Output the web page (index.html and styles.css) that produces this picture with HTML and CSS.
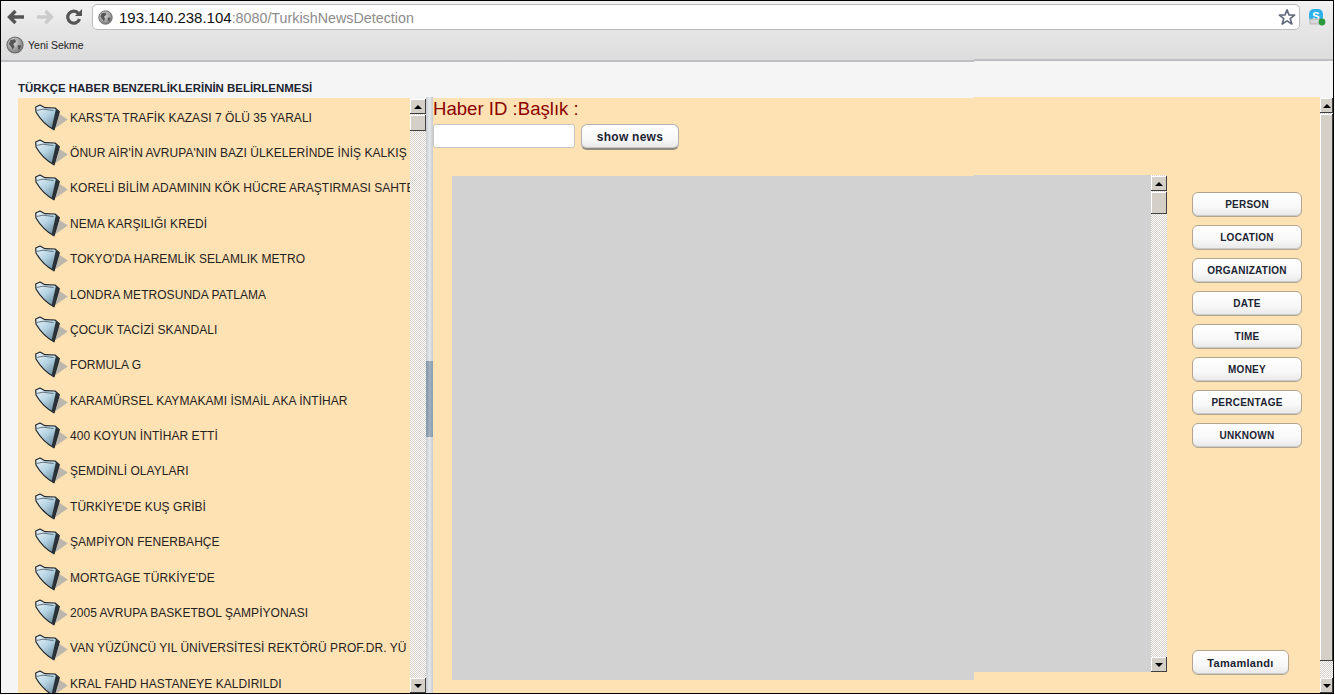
FILE: index.html
```html
<!DOCTYPE html>
<html lang="tr">
<head>
  <meta charset="UTF-8">
  <meta name="viewport" content="width=device-width, initial-scale=1.0">
  <title>TurkishNewsDetection</title>
  <link rel="stylesheet" href="styles.css">
</head>
<body>
<svg class="defs" width="0" height="0" aria-hidden="true">
  <defs>
    <linearGradient id="folderFill" x1="0" y1="0" x2="0.8" y2="1">
      <stop offset="0" stop-color="#eef6fa"/>
      <stop offset="0.5" stop-color="#b4d2e2"/>
      <stop offset="1" stop-color="#5f8296"/>
    </linearGradient>
    <radialGradient id="globeFill" cx="0.4" cy="0.35" r="0.75">
      <stop offset="0" stop-color="#dedede"/>
      <stop offset="1" stop-color="#6e6e6e"/>
    </radialGradient>
    <symbol id="folder" viewBox="0 0 34 28">
      <path d="M18 26.5 L33.8 15.5 L24 9 Z" fill="#BBB7AD"/>
      <path d="M1.7 3 L6 1 L11 3.7 L21 4 L25.3 7.7 L20 25.8 Q9 20 2 8 Z" fill="url(#folderFill)" stroke="#20272c" stroke-width="1.2" stroke-linejoin="round"/>
      <path d="M22 4.8 L25.3 7.7 L20 25.8 L17.6 24.6 Z" fill="#2a3238"/>
      <path d="M3 6.4 L9 5.2 L19.5 6.5" fill="none" stroke="#4a5a64" stroke-width="0.8"/>
    </symbol>
    <symbol id="globe" viewBox="0 0 16 16">
      <circle cx="8" cy="8" r="7.2" fill="url(#globeFill)" stroke="#6a6a6a" stroke-width="0.9"/>
      <path d="M4 3.5 L8 2.8 L9 5 L6.5 7 L7.5 9.5 L6 12 L4.5 9.5 L2.6 7 Z M10.5 8 L13.5 8.5 L12 12.5 L10.5 11 Z" fill="#565656"/>
    </symbol>
  </defs>
</svg>

<div class="window">
  <header class="browser">
    <div class="toolbar">
      <svg class="nav-icon" viewBox="0 0 18 16"><path d="M8.5 2 L2.5 8 L8.5 14 M3 8 H17" fill="none" stroke="#555555" stroke-width="3.4"/></svg>
      <svg class="nav-icon" viewBox="0 0 18 16"><path d="M9.5 2 L15.5 8 L9.5 14 M15 8 H1" fill="none" stroke="#CBCBCB" stroke-width="3.4"/></svg>
      <svg class="nav-icon" viewBox="0 0 18 16"><path d="M13.5 4.5 A6 6 0 1 0 14.5 10" fill="none" stroke="#555555" stroke-width="3.2"/><path d="M10 7 H17 V0 Z" fill="#555555"/></svg>
      <div class="address">
        <svg class="address-globe"><use href="#globe"/></svg>
        <span class="url"><span class="url-host">193.140.238.104</span>:8080/TurkishNewsDetection</span>
        <svg class="star" viewBox="0 0 18 18"><path d="M9 1.8 L11 7 L16.6 7.2 L12.2 10.6 L13.8 16 L9 12.9 L4.2 16 L5.8 10.6 L1.4 7.2 L7 7 Z" fill="#fff" stroke="#626a7c" stroke-width="1.7" stroke-linejoin="round"/></svg>
      </div>
      <svg class="skype" viewBox="0 0 18 18">
        <rect x="1" y="1" width="14" height="13" rx="5" fill="#2db0ea"/>
        <text x="8" y="11.5" class="skype-s">S</text>
        <rect x="2" y="11" width="10" height="5" fill="#d8d8d8" stroke="#999" stroke-width="0.6"/>
        <circle cx="14" cy="14" r="3.4" fill="#2a9a3c"/>
      </svg>
    </div>
    <div class="bookmarks">
      <svg class="bookmark-globe"><use href="#globe"/></svg>
      <span>Yeni Sekme</span>
    </div>
  </header>

  <main class="page">
    <h1 class="page-title">TÜRKÇE HABER BENZERLİKLERİNİN BELİRLENMESİ</h1>
    <div class="split">
      <ul class="news-list">
        <li class="news-item"><svg class="folder"><use href="#folder"/></svg>KARS'TA TRAFİK KAZASI 7 ÖLÜ 35 YARALI</li>
        <li class="news-item"><svg class="folder"><use href="#folder"/></svg>ÖNUR AİR'İN AVRUPA'NIN BAZI ÜLKELERİNDE İNİŞ KALKIŞ</li>
        <li class="news-item"><svg class="folder"><use href="#folder"/></svg>KORELİ BİLİM ADAMININ KÖK HÜCRE ARAŞTIRMASI SAHTE</li>
        <li class="news-item"><svg class="folder"><use href="#folder"/></svg>NEMA KARŞILIĞI KREDİ</li>
        <li class="news-item"><svg class="folder"><use href="#folder"/></svg>TOKYO'DA HAREMLİK SELAMLIK METRO</li>
        <li class="news-item"><svg class="folder"><use href="#folder"/></svg>LONDRA METROSUNDA PATLAMA</li>
        <li class="news-item"><svg class="folder"><use href="#folder"/></svg>ÇOCUK TACİZİ SKANDALI</li>
        <li class="news-item"><svg class="folder"><use href="#folder"/></svg>FORMULA G</li>
        <li class="news-item"><svg class="folder"><use href="#folder"/></svg>KARAMÜRSEL KAYMAKAMI İSMAİL AKA İNTİHAR</li>
        <li class="news-item"><svg class="folder"><use href="#folder"/></svg>400 KOYUN İNTİHAR ETTİ</li>
        <li class="news-item"><svg class="folder"><use href="#folder"/></svg>ŞEMDİNLİ OLAYLARI</li>
        <li class="news-item"><svg class="folder"><use href="#folder"/></svg>TÜRKİYE'DE KUŞ GRİBİ</li>
        <li class="news-item"><svg class="folder"><use href="#folder"/></svg>ŞAMPİYON FENERBAHÇE</li>
        <li class="news-item"><svg class="folder"><use href="#folder"/></svg>MORTGAGE TÜRKİYE'DE</li>
        <li class="news-item"><svg class="folder"><use href="#folder"/></svg>2005 AVRUPA BASKETBOL ŞAMPİYONASI</li>
        <li class="news-item"><svg class="folder"><use href="#folder"/></svg>VAN YÜZÜNCÜ YIL ÜNİVERSİTESİ REKTÖRÜ PROF.DR. YÜ</li>
        <li class="news-item"><svg class="folder"><use href="#folder"/></svg>KRAL FAHD HASTANEYE KALDIRILDI</li>
      </ul>

      <div class="sb sb-list">
        <div class="sb-btn sb-up"></div>
        <div class="sb-thumb sb-thumb-small"></div>
        <div class="sb-track"></div>
        <div class="sb-btn sb-down"></div>
      </div>

      <div class="splitter"><div class="splitter-handle"></div></div>

      <section class="detail">
        <div class="detail-title">Haber ID :Başlık :</div>
        <div class="search-row">
          <input class="id-input" type="text">
          <button class="btn btn-show" type="button">show news</button>
        </div>
        <div class="work-row">
          <div class="viewer">
            <div class="viewer-old"></div>
            <div class="viewer-new"></div>
            <div class="sb sb-viewer">
              <div class="sb-btn sb-up"></div>
              <div class="sb-thumb sb-thumb-viewer"></div>
              <div class="sb-track"></div>
              <div class="sb-btn sb-down"></div>
            </div>
          </div>
          <div class="tags">
            <div class="tag-list">
              <button class="btn btn-tag" type="button">PERSON</button>
              <button class="btn btn-tag" type="button">LOCATION</button>
              <button class="btn btn-tag" type="button">ORGANIZATION</button>
              <button class="btn btn-tag" type="button">DATE</button>
              <button class="btn btn-tag" type="button">TIME</button>
              <button class="btn btn-tag" type="button">MONEY</button>
              <button class="btn btn-tag" type="button">PERCENTAGE</button>
              <button class="btn btn-tag" type="button">UNKNOWN</button>
            </div>
            <button class="btn btn-done" type="button">Tamamlandı</button>
          </div>
        </div>
      </section>

      <div class="sb sb-page">
        <div class="sb-btn sb-up"></div>
        <div class="sb-thumb sb-thumb-page"></div>
        <div class="sb-track"></div>
        <div class="sb-btn sb-down"></div>
      </div>
    </div>
  </main>
</div>
</body>
</html>
```

FILE: styles.css
```css
html, body {
  margin: 0;
  padding: 0;
  background-color: #FFFFFF;
}
body {
  width: 1335px;
  height: 695px;
  overflow: hidden;
  font-family: "Liberation Sans", Arial, sans-serif;
}
.defs {
  display: block;
  height: 0;
}
.window {
  box-sizing: border-box;
  width: 1334px;
  height: 694px;
  border: 1px solid #000000;
  display: flex;
  flex-direction: column;
  background-color: #F5F5F5;
}

/* browser chrome, the bottom line sits 1px higher right of the repaint seam */
.browser {
  height: 61px;
  flex: none;
  box-sizing: border-box;
  background:
    linear-gradient(#BDBDC2, #BDBDC2) 0 59px / 973px 2px no-repeat,
    linear-gradient(#BDBDC2, #BDBDC2) 973px 58px / 100% 2px no-repeat,
    linear-gradient(#F5F5F5, #F5F5F5) 973px 60px / 100% 1px no-repeat,
    linear-gradient(#F2F2F2, #E6E6E6 45%, #DCDCDC);
}
.toolbar {
  height: 32px;
  display: flex;
  align-items: center;
  padding-left: 6px;
}
.nav-icon {
  width: 18px;
  height: 16px;
  margin-right: 11px;
  flex: none;
}
.address {
  width: 1208px;
  height: 26px;
  margin-left: -2px;
  box-sizing: border-box;
  background-color: #FFFFFF;
  border: 1px solid #BBBBBB;
  border-radius: 5px;
  display: flex;
  align-items: center;
  padding: 0 3px 0 5px;
}
.address-globe {
  width: 15px;
  height: 15px;
  flex: none;
}
.url {
  font-size: 14.3px;
  color: #8C8C8C;
  margin-left: 6px;
  flex: 1;
}
.url-host {
  font-size: 15px;
  color: #111111;
}
.star {
  width: 18px;
  height: 18px;
}
.skype {
  width: 18px;
  height: 18px;
  margin-left: 8px;
  flex: none;
}
.skype-s {
  font-size: 11px;
  font-weight: bold;
  fill: #FFFFFF;
  text-anchor: middle;
}
.bookmarks {
  height: 24px;
  display: flex;
  align-items: center;
  padding-left: 5px;
  font-size: 10.5px;
  color: #222222;
}
.bookmark-globe {
  width: 18px;
  height: 18px;
  margin-right: 4px;
}

/* page */
.page {
  flex: 1;
  min-height: 0;
  display: flex;
  flex-direction: column;
  padding-left: 17px;
}
.page-title {
  margin: 0;
  height: 35px;
  box-sizing: border-box;
  padding-top: 19px;
  font-size: 11.45px;
  line-height: 14px;
  font-weight: bold;
  color: #1E2430;
}
.split {
  flex: 1;
  min-height: 0;
  display: grid;
  grid-template-columns: 392px 16px 7px 887px 13px;
}

/* news list */
.news-list {
  list-style: none;
  margin: 1px 0 0 0;
  padding: 2px 0 0 0;
  background-color: #FEE2B4;
  overflow: hidden;
  min-height: 0;
}
.news-item {
  height: 35.375px;
  display: flex;
  align-items: center;
  padding-left: 16px;
  font-size: 12px;
  letter-spacing: 0.05px;
  color: #26221E;
  white-space: nowrap;
}
.folder {
  width: 34px;
  height: 28px;
  margin-right: 2px;
  flex: none;
}

/* classic scrollbars */
.sb {
  display: flex;
  flex-direction: column;
  min-height: 0;
  background: conic-gradient(#D4D0C8 25%, #FFFFFF 0 50%, #D4D0C8 0 75%, #FFFFFF 0) 0 0 / 2px 2px;
}
.sb-list {
  margin-top: 2px;
}
.sb-page {
  margin-top: 1px;
}
.sb-btn {
  height: 15px;
  flex: none;
  background-color: #D4D0C8;
  box-shadow: inset -1px -1px #404040, inset 1px 1px #FFFFFF;
  display: flex;
  align-items: center;
  justify-content: center;
}
.sb-up::before, .sb-down::before {
  content: "";
  border-left: 4px solid transparent;
  border-right: 4px solid transparent;
}
.sb-up::before {
  border-bottom: 4px solid #000000;
}
.sb-down::before {
  border-top: 4px solid #000000;
}
.sb-thumb {
  flex: none;
  margin-top: 1px;
  background-color: #D4D0C8;
  box-shadow: inset -1px -1px #404040, inset 1px 1px #FFFFFF;
}
.sb-thumb-small {
  height: 16px;
}
.sb-thumb-viewer {
  height: 22px;
}
.sb-thumb-page {
  height: 547px;
}
.sb-track {
  flex: 1;
}

/* splitter */
.splitter {
  background: linear-gradient(90deg, #C9CDD1, #E6E7E9 50%, #C8CBCF);
  padding-top: 264px;
}
.splitter-handle {
  height: 76px;
  background: linear-gradient(90deg, #7F93A5, #9FB0BF 50%, #8A9DAE);
}

/* detail panel */
.detail {
  background: linear-gradient(#F5F5F5, #F5F5F5) 0 0 / 541px 1px no-repeat, #FEE2B4;
  display: flex;
  flex-direction: column;
  min-width: 0;
}
.detail-title {
  margin-top: 2px;
  height: 20px;
  font-size: 18.6px;
  line-height: 20px;
  color: #8B0000;
}
.search-row {
  margin-top: 5px;
  height: 26px;
  display: flex;
  align-items: flex-start;
}
.id-input {
  box-sizing: border-box;
  width: 142px;
  height: 24px;
  border: 1px solid #C4C4C4;
  border-radius: 3px;
  background-color: #FFFFFF;
  padding: 0 3px;
  margin: 0;
}
.btn {
  box-sizing: border-box;
  margin: 0;
  padding: 0;
  font-family: "Liberation Sans", Arial, sans-serif;
  font-weight: bold;
  color: #1C2433;
  background: linear-gradient(#FFFFFF, #F8F8F8 60%, #E8E8E8);
  border: 1px solid #B3A68F;
  border-radius: 6px;
  box-shadow: inset 0 -1px #C9C9C9;
  cursor: pointer;
}
.btn-show {
  width: 98px;
  height: 26px;
  margin-left: 6px;
  font-size: 12px;
  letter-spacing: 0.25px;
  border-color: #B0B0B0;
  border-bottom: 2px solid #8F8A80;
}
.work-row {
  margin-top: 25px;
  padding-left: 19px;
  display: flex;
  align-items: flex-start;
}
.viewer {
  display: flex;
  align-items: flex-start;
}
.viewer-old {
  width: 522px;
  height: 504px;
  margin-top: 1px;
  background-color: #D2D2D2;
}
.viewer-new {
  width: 177px;
  height: 497px;
  background-color: #D2D2D2;
}
.sb-viewer {
  width: 16px;
  height: 497px;
}
.sb-viewer .sb-btn {
  margin-top: 1px;
}
.tags {
  margin-left: 25px;
  height: 500px;
  box-sizing: border-box;
  padding-top: 17px;
  display: flex;
  flex-direction: column;
  justify-content: space-between;
  align-items: flex-start;
}
.tag-list {
  display: flex;
  flex-direction: column;
  gap: 8px;
}
.btn-tag {
  width: 110px;
  height: 25px;
  font-size: 10px;
  letter-spacing: 0.25px;
}
.btn-done {
  width: 97px;
  height: 25px;
  font-size: 11px;
  letter-spacing: 0.3px;
}
```
